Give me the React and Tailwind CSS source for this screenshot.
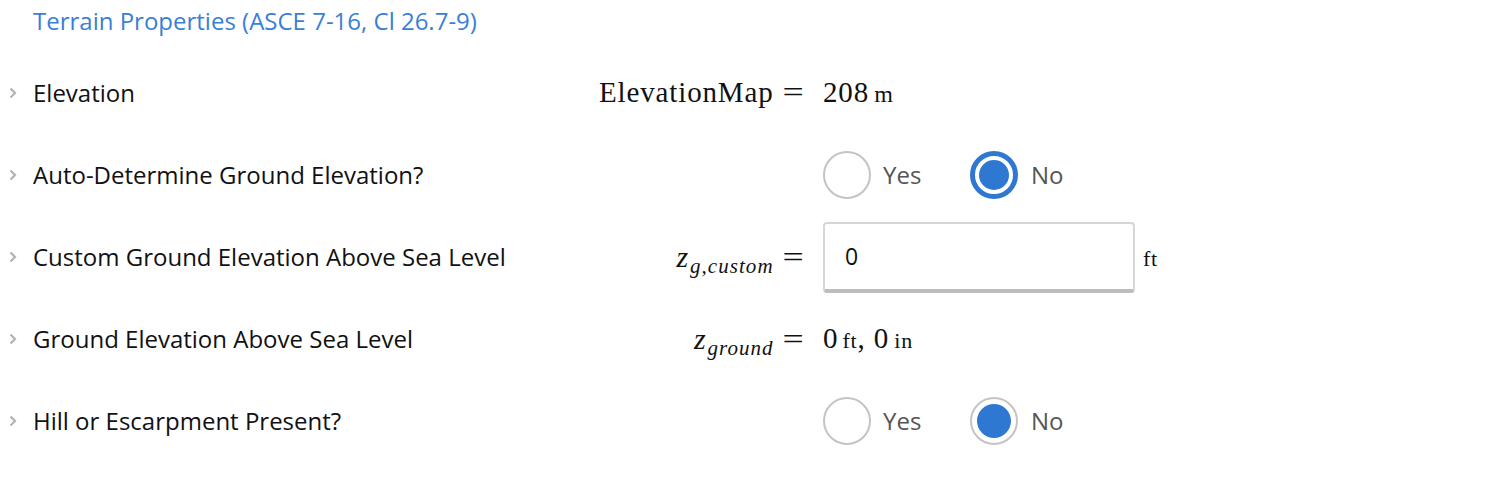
import React from "react";

const Chevron = () => (
  <svg width="8" height="12" viewBox="0 0 8 12" className="block">
    <path d="M1.5 1.5 L6 6 L1.5 10.5" fill="none" stroke="#b3b3b3" strokeWidth="2.2" />
  </svg>
);

const Math = ({ children, className = "" }) => (
  <span className={"font-['Liberation_Serif'] text-[#111] tracking-[0.03em] whitespace-nowrap " + className}>{children}</span>
);

const Eq = () => (
  <span className="inline-block scale-x-[1.3] ml-[11px] mr-[2px] tracking-normal">=</span>
);

const Radio = ({ checked, focused }) => {
  if (focused) {
    return (
      <span className="w-[48px] h-[48px] rounded-full border-[5px] border-[#2f78d2] flex items-center justify-center bg-white">
        <span className="w-[30px] h-[30px] rounded-full bg-[#2f78d2]" />
      </span>
    );
  }
  return (
    <span className="w-[48px] h-[48px] rounded-full border-2 border-[#c4c4c4] flex items-center justify-center bg-white">
      {checked && <span className="w-[34px] h-[34px] rounded-full bg-[#2f78d2]" />}
    </span>
  );
};

const RadioPair = ({ value, focused }) => (
  <div className="flex items-center">
    <div className="flex items-center w-[147px]">
      <Radio checked={value === "yes"} />
      <span className="ml-3 text-[24px] text-[#555]">Yes</span>
    </div>
    <div className="flex items-center">
      <Radio checked={value === "no"} focused={focused} />
      <span className="ml-[13px] text-[24px] text-[#555]">No</span>
    </div>
  </div>
);

const Row = ({ label, eq, children }) => (
  <div className="flex items-center h-[82px]">
    <div className="w-[33px] flex justify-center pr-[7px]">
      <Chevron />
    </div>
    <div className="w-[545px] text-[24px] text-[#111]">{label}</div>
    <div className="w-[225px] text-right">{eq}</div>
    <div className="ml-[20px] flex items-center">{children}</div>
  </div>
);

const Sub = ({ children }) => (
  <span className="relative top-[6px] ml-[1px] text-[21px] italic tracking-[0.05em]">{children}</span>
);

export default function App() {
  return (
    <div className="w-[1496px] h-[484px] bg-white font-['Open_Sans'] overflow-hidden">
      <div className="h-[52px] pt-[4px] pl-[33px]">
        <div className="leading-[34px] text-[24px] text-[#3a7fd5]">
          Terrain Properties (ASCE 7-16, Cl 26.7-9)
        </div>
      </div>

      <Row
        label="Elevation"
        eq={<Math className="text-[29px] tracking-[0.02em]">ElevationMap<Eq /></Math>}
      >
        <Math className="text-[29px]">
          208<span className="ml-[5px] text-[24px]">m</span>
        </Math>
      </Row>

      <Row label="Auto-Determine Ground Elevation?" eq={null}>
        <RadioPair value="no" focused />
      </Row>

      <Row
        label="Custom Ground Elevation Above Sea Level"
        eq={
          <Math className="text-[29px]">
            <i className="text-[30px]">z</i>
            <Sub>g,custom</Sub>
            <Eq />
          </Math>
        }
      >
        <div className="flex items-center">
          <div className="w-[312px] h-[71px] rounded-[4px] border-2 border-[#d6d6d6] border-b-[4px] border-b-[#bdbdbd] flex items-center pl-[20px] text-[23px] text-[#111]">
            0
          </div>
          <Math className="ml-[8px] text-[22px] self-start mt-[20px]">ft</Math>
        </div>
      </Row>

      <Row
        label="Ground Elevation Above Sea Level"
        eq={
          <Math className="text-[29px]">
            <i className="text-[30px]">z</i>
            <Sub>ground</Sub>
            <Eq />
          </Math>
        }
      >
        <Math className="text-[29px]">
          0<span className="ml-[4px] text-[22px]">ft</span>, 0<span className="ml-[5px] text-[22px]">in</span>
        </Math>
      </Row>

      <Row label="Hill or Escarpment Present?" eq={null}>
        <RadioPair value="no" />
      </Row>
    </div>
  );
}
